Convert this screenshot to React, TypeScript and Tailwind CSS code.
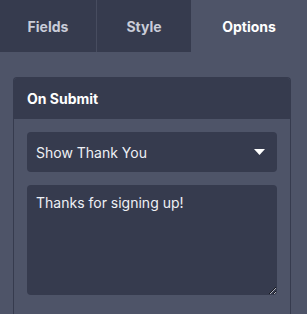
import React, { useState } from 'react';

const tabs = ['Fields', 'Style', 'Options'];

const App = () => {
  const [active, setActive] = useState('Options');
  const [message, setMessage] = useState('Thanks for signing up!');

  return (
    <div
      className="w-[307px] h-[314px] bg-[#4e5468] overflow-hidden"
      style={{ fontFamily: 'Inter, "Noto Sans", sans-serif' }}
    >
      <div className="flex h-[52px]">
        {tabs.map((t, i) => (
          <button
            key={t}
            onClick={() => setActive(t)}
            className={
              (i === 0 ? 'w-[97px] border-r border-[#474c5f] ' : i === 1 ? 'w-[94px] ' : 'flex-1 ') +
              (active === t ? 'bg-[#4e5468] text-white' : 'bg-[#363b4e] text-[#c9ccd8]') +
              ' flex items-center justify-center text-[14px] font-bold'
            }
          >
            {t}
          </button>
        ))}
      </div>

      <div className="mt-[25px] ml-[13px] w-[278px] rounded-t-[4px] border border-[#363b4e] border-b-0">
        <div className="h-[41px] bg-[#363b4e] flex items-center px-[13px] text-[14px] font-bold text-white rounded-t-[3px]">
          On Submit
        </div>
        <div className="px-[13px] pt-[13px] pb-[20px] flex flex-col gap-[13px]">
          <div className="h-[40px] bg-[#363b4e] rounded-[4px] flex items-center justify-between pl-[9px] pr-[12px]">
            <span className="text-[14px] text-[#eef0f5]">Show Thank You</span>
            <svg width="11" height="6" viewBox="0 0 11 6">
              <path d="M0 0 H11 L5.5 6 Z" fill="#ffffff" />
            </svg>
          </div>
          <textarea
            value={message}
            onChange={e => setMessage(e.target.value)}
            className="h-[110px] bg-[#363b4e] rounded-[4px] px-[9px] py-[7px] text-[14px] text-[#eef0f5] outline-none resize-y"
          />
        </div>
      </div>
    </div>
  );
};

export default App;
